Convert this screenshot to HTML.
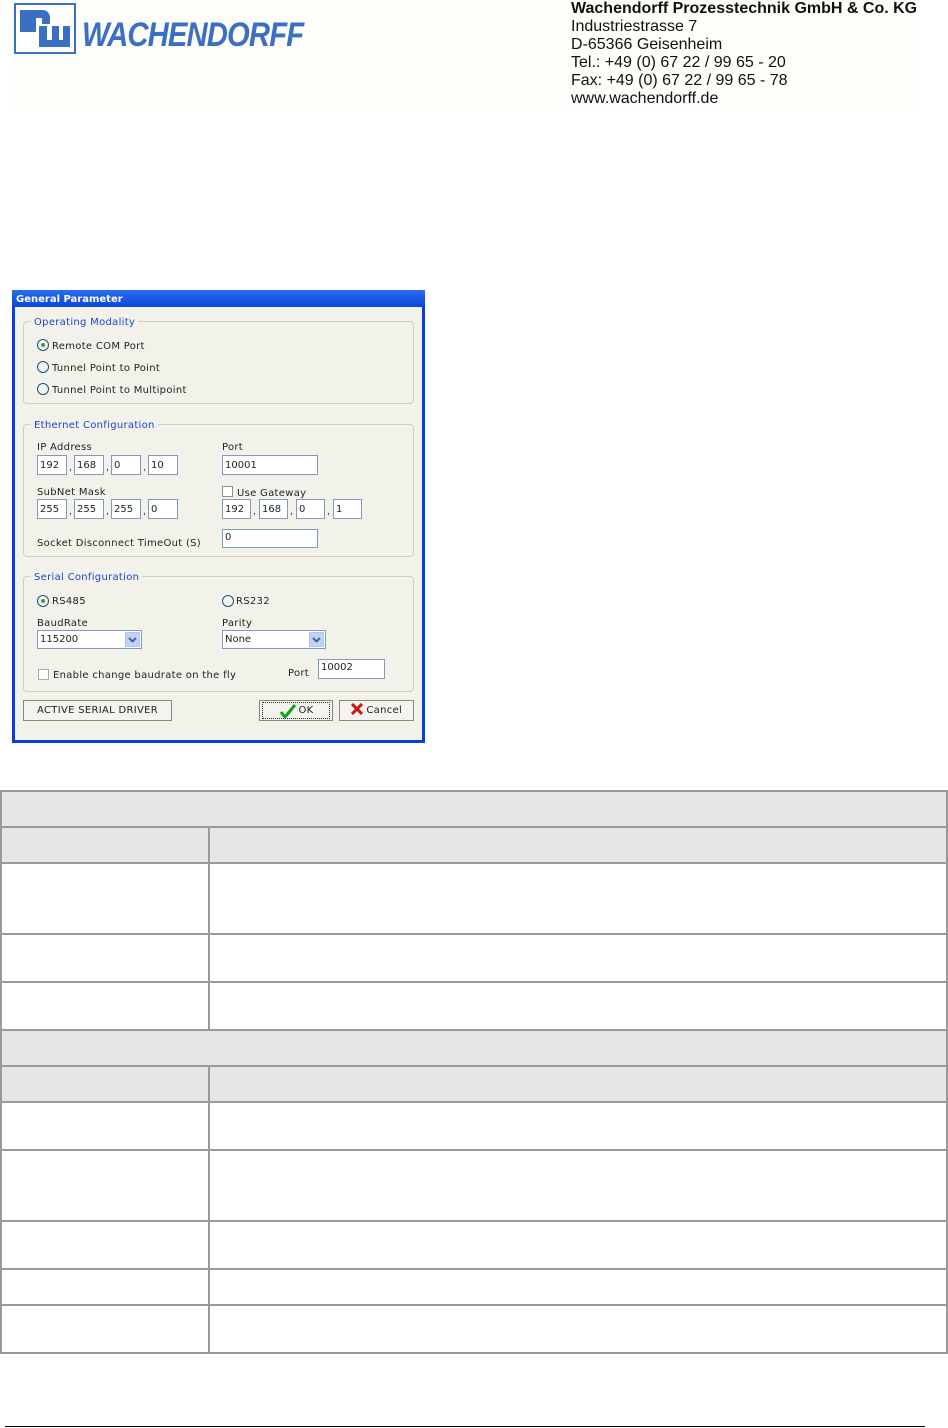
<!DOCTYPE html>
<html><head><meta charset="utf-8"><style>
*{margin:0;padding:0;box-sizing:border-box}
body{width:948px;height:1428px;background:#fff;position:relative;overflow:hidden;font-family:"Liberation Sans",sans-serif}
.a{position:absolute}
.hd{background:#fdfdfa}
.t{font-family:"DejaVu Sans","Liberation Sans",sans-serif;font-size:10px;color:#222;position:absolute;white-space:nowrap;letter-spacing:.3px;margin-top:2px}
.gb{position:absolute;border:1px solid #d0d0bf;border-radius:4px}
.gl{position:absolute;background:#f3f2ea;padding:0 3px;color:#1a45d0;font-family:"DejaVu Sans",sans-serif;font-size:10px;letter-spacing:.3px;margin-top:2px}
.in{position:absolute;background:#fff;border:1px solid #7f9db9;height:20px;font-family:"DejaVu Sans",sans-serif;font-size:10px;padding:4px 2px 0;color:#222}
.dot{position:absolute;font-size:10px;color:#222}
.r{position:absolute;width:12px;height:12px;border:1px solid #1c5180;border-radius:50%;background:#f4f4f0}
.r.on::after{content:"";position:absolute;left:3px;top:3px;width:4px;height:4px;border-radius:50%;background:#2fa52f}
.cb{position:absolute;width:11px;height:11px;border:1px solid #8d8d8d;background:#fff}
.btn{position:absolute;height:21px;border:1px solid #888;background:#f4f3ee;font-family:"DejaVu Sans",sans-serif;font-size:10px;text-align:center;line-height:20px;color:#222;letter-spacing:.3px}
.dd{position:absolute;top:1px;right:1px;width:15px;height:15px;background:#c1d3fb;border:1px solid #b0c4ee}
.tb{position:absolute;background:#999}
</style></head><body>
<div class="a hd" style="left:10px;top:0;width:910px;height:106px"></div>
<div class="a" style="left:14px;top:3px;width:62px;height:51px;border:2px solid #3b6fc4;background:#fff"></div>
<svg class="a" style="left:20px;top:10px" width="50" height="38" viewBox="0 0 50 38"><path d="M0 0h22c5 0 8 3 8 8v6h-8V8h-6v14H0z" fill="#3b6fc4"/><path d="M19 16h8v14h5V16h7v14h4V16h7v21H19z" fill="#3b6fc4"/></svg>
<div class="a" style="left:82px;top:15px;font-family:'Liberation Sans',sans-serif;font-weight:bold;font-style:italic;font-size:34px;line-height:40px;color:#3b6fc4;letter-spacing:-1px;white-space:nowrap;transform:scaleX(0.86);transform-origin:left">WACHENDORFF</div>
<div class="a" style="left:571px;top:0;font-size:16px;line-height:18px;color:#111">
<div style="font-weight:bold">Wachendorff Prozesstechnik GmbH &amp; Co. KG</div>
<div>Industriestrasse 7</div><div>D-65366 Geisenheim</div><div>Tel.: +49 (0) 67 22 / 99 65 - 20</div><div>Fax: +49 (0) 67 22 / 99 65 - 78</div><div>www.wachendorff.de</div></div>

<div class="a" style="left:12px;top:290px;width:413px;height:453px;background:#0a3ee0;"></div>
<div class="a" style="left:12px;top:290px;width:413px;height:17px;background:linear-gradient(#2a6cf0,#0b47d8)"></div>
<div class="a" style="left:16px;top:294px;color:#fff;font-family:'DejaVu Sans',sans-serif;font-weight:bold;font-size:10px">General Parameter</div>
<div class="a" style="left:15px;top:307px;width:407px;height:433px;background:#f3f2ea"></div>

<div class="gb" style="left:23px;top:321px;width:391px;height:83px"></div>
<div class="gl" style="left:31px;top:315px">Operating Modality</div>
<div class="r on" style="left:37px;top:339px"></div><div class="t" style="left:52px;top:339px">Remote COM Port</div>
<div class="r" style="left:37px;top:361px"></div><div class="t" style="left:52px;top:361px">Tunnel Point to Point</div>
<div class="r" style="left:37px;top:383px"></div><div class="t" style="left:52px;top:383px">Tunnel Point to Multipoint</div>

<div class="gb" style="left:23px;top:424px;width:391px;height:133px"></div>
<div class="gl" style="left:31px;top:418px">Ethernet Configuration</div>
<div class="t" style="left:37px;top:440px">IP Address</div>
<div class="t" style="left:222px;top:440px">Port</div>
<div class="in" style="left:37px;top:455px;width:30px">192</div><div class="dot" style="left:69px;top:462px">,</div>
<div class="in" style="left:74px;top:455px;width:30px">168</div><div class="dot" style="left:106px;top:462px">,</div>
<div class="in" style="left:111px;top:455px;width:30px">0</div><div class="dot" style="left:143px;top:462px">,</div>
<div class="in" style="left:148px;top:455px;width:30px">10</div>
<div class="in" style="left:222px;top:455px;width:96px">10001</div>
<div class="t" style="left:37px;top:485px">SubNet Mask</div>
<div class="cb" style="left:222px;top:486px"></div><div class="t" style="left:237px;top:486px">Use Gateway</div>
<div class="in" style="left:37px;top:499px;width:30px">255</div><div class="dot" style="left:69px;top:506px">,</div>
<div class="in" style="left:74px;top:499px;width:30px">255</div><div class="dot" style="left:106px;top:506px">,</div>
<div class="in" style="left:111px;top:499px;width:30px">255</div><div class="dot" style="left:143px;top:506px">,</div>
<div class="in" style="left:148px;top:499px;width:30px">0</div>
<div class="in" style="left:222px;top:499px;width:29px">192</div><div class="dot" style="left:253px;top:506px">,</div>
<div class="in" style="left:259px;top:499px;width:29px">168</div><div class="dot" style="left:290px;top:506px">,</div>
<div class="in" style="left:296px;top:499px;width:29px">0</div><div class="dot" style="left:327px;top:506px">,</div>
<div class="in" style="left:333px;top:499px;width:29px">1</div>
<div class="t" style="left:37px;top:536px">Socket Disconnect TimeOut (S)</div>
<div class="in" style="left:222px;top:529px;width:96px;height:19px;padding-top:2px">0</div>

<div class="gb" style="left:23px;top:576px;width:391px;height:116px"></div>
<div class="gl" style="left:31px;top:570px">Serial Configuration</div>
<div class="r on" style="left:37px;top:595px"></div><div class="t" style="left:52px;top:594px">RS485</div>
<div class="r" style="left:222px;top:595px"></div><div class="t" style="left:236px;top:594px">RS232</div>
<div class="t" style="left:37px;top:616px">BaudRate</div>
<div class="t" style="left:222px;top:616px">Parity</div>
<div class="in" style="left:37px;top:630px;width:105px;height:19px;padding-top:3px">115200<div class="dd"><svg width="13" height="13" viewBox="0 0 13 13" style="display:block"><path d="M3 5l3.5 3.5L10 5" stroke="#4d6185" stroke-width="2" fill="none"/></svg></div></div>
<div class="in" style="left:222px;top:630px;width:104px;height:19px;padding-top:3px">None<div class="dd"><svg width="13" height="13" viewBox="0 0 13 13" style="display:block"><path d="M3 5l3.5 3.5L10 5" stroke="#4d6185" stroke-width="2" fill="none"/></svg></div></div>
<div class="cb" style="left:38px;top:669px;border-color:#aaa"></div><div class="t" style="left:53px;top:668px">Enable change baudrate on the fly</div>
<div class="t" style="left:288px;top:666px">Port</div>
<div class="in" style="left:318px;top:659px;width:67px;padding-top:2px">10002</div>

<div class="btn" style="left:23px;top:700px;width:149px">ACTIVE SERIAL DRIVER</div>
<div class="btn" style="left:259px;top:700px;width:74px"><span style="border:1px dotted #333;display:inline-block;width:68px;height:17px;line-height:16px;margin-top:1px;position:relative"><svg width="18" height="15" viewBox="0 0 18 15" style="position:absolute;left:16px;top:1px"><path d="M2 8l4 5L16 1" stroke="#15a015" stroke-width="3" fill="none"/></svg><span style="margin-left:20px">OK</span></span></div>
<div class="btn" style="left:339px;top:700px;width:75px"><svg width="12" height="12" viewBox="0 0 12 12" style="vertical-align:-2px"><path d="M1 1l10 10M11 1L1 11" stroke="#c81818" stroke-width="3"/></svg> Cancel</div>

<div class="a" style="left:0;top:791px;width:948px;height:72px;background:#e5e5e5"></div>
<div class="a" style="left:0;top:1030px;width:948px;height:72px;background:#e5e5e5"></div>
<div class="tb" style="left:0;top:790px;width:948px;height:2px"></div>
<div class="tb" style="left:0;top:826px;width:948px;height:2px"></div>
<div class="tb" style="left:0;top:862px;width:948px;height:2px"></div>
<div class="tb" style="left:0;top:933px;width:948px;height:2px"></div>
<div class="tb" style="left:0;top:981px;width:948px;height:2px"></div>
<div class="tb" style="left:0;top:1029px;width:948px;height:2px"></div>
<div class="tb" style="left:0;top:1065px;width:948px;height:2px"></div>
<div class="tb" style="left:0;top:1101px;width:948px;height:2px"></div>
<div class="tb" style="left:0;top:1149px;width:948px;height:2px"></div>
<div class="tb" style="left:0;top:1220px;width:948px;height:2px"></div>
<div class="tb" style="left:0;top:1268px;width:948px;height:2px"></div>
<div class="tb" style="left:0;top:1304px;width:948px;height:2px"></div>
<div class="tb" style="left:0;top:1352px;width:948px;height:2px"></div>
<div class="tb" style="left:0;top:790px;width:2px;height:564px"></div>
<div class="tb" style="left:946px;top:790px;width:2px;height:564px"></div>
<div class="tb" style="left:208px;top:826px;width:2px;height:204px"></div>
<div class="tb" style="left:208px;top:1065px;width:2px;height:289px"></div>

<div class="a" style="left:5px;top:1426px;width:920px;height:1px;background:#000"></div>
</body></html>
